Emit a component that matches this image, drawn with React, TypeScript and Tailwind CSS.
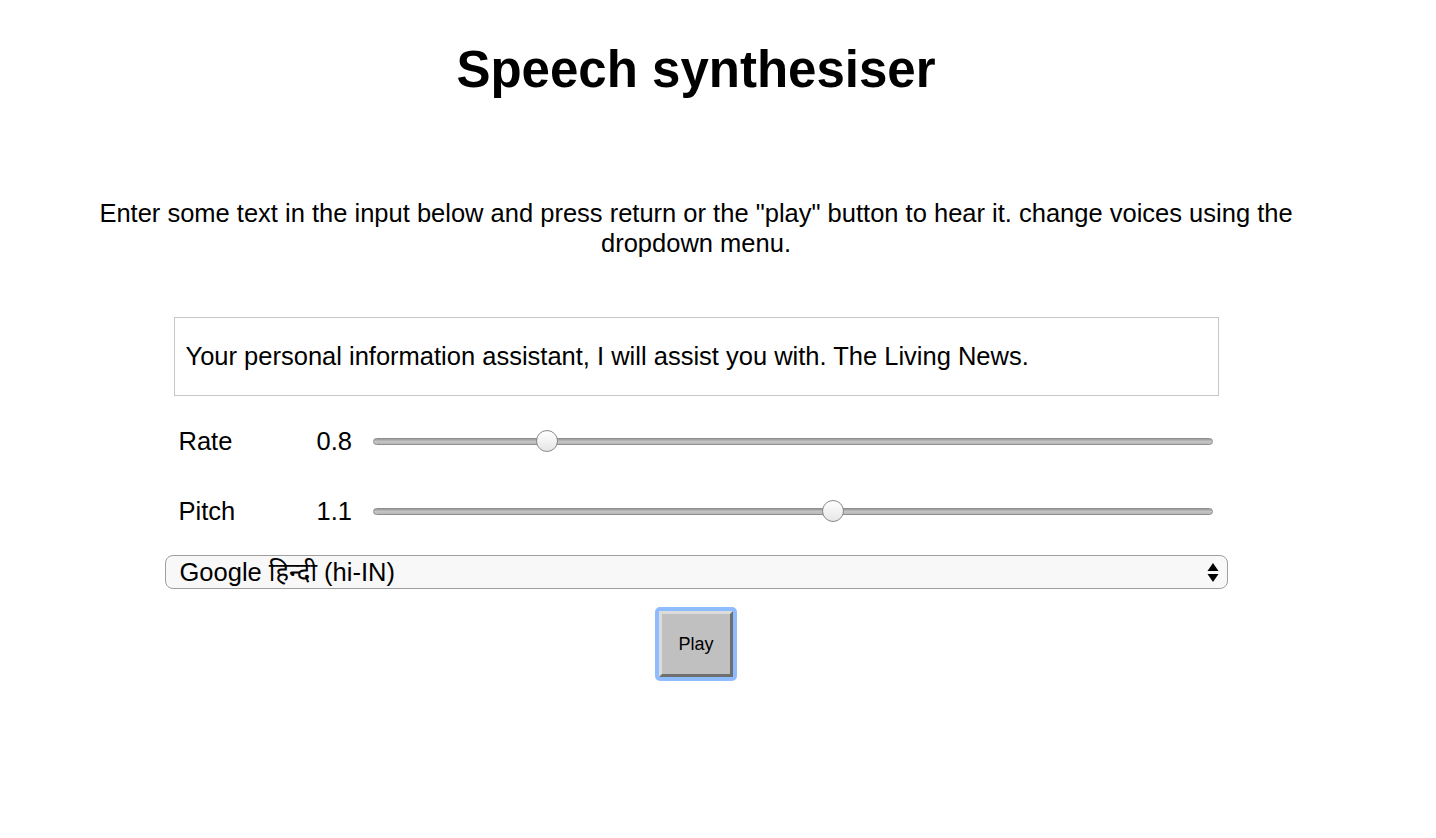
const font = { fontFamily: '"Liberation Sans", Arial, "Noto Sans", sans-serif' };

const Slider = ({ value, min, max }: { value: number; min: number; max: number }) => {
  const pct = (value - min) / (max - min);
  return (
    <div className="relative h-[24px] flex-1 flex items-center">
      <div className="h-[7px] w-full rounded-full border border-[#8e8e8e] bg-gradient-to-b from-[#9a9a9a] via-[#c4c4c4] to-[#b8b8b8]" />
      <div
        className="absolute top-[1px] h-[22px] w-[22px] rounded-full border border-[#8a8a8a] bg-gradient-to-b from-[#ffffff] to-[#e6e6e6]"
        style={{ left: `calc(${pct} * (100% - 22px))` }}
      />
    </div>
  );
};

export default function App() {
  const rate = 0.8;
  const pitch = 1.1;

  return (
    <div className="w-[1392px] bg-white text-black" style={font}>
      <h1 className="pt-[40px] text-center text-[51px] font-bold leading-[60px]">Speech synthesiser</h1>

      <p className="mx-auto mt-[98px] w-[1220px] text-center text-[25.5px] leading-[30px]">
        Enter some text in the input below and press return or the "play" button to hear it. change voices using the
        dropdown menu.
      </p>

      <div className="mx-auto mt-[59px] flex w-[1063px] flex-col">
        <div className="mx-auto flex h-[79px] w-[1045px] items-center border border-[#c6c6c6] px-[11px] text-[25.5px]">
          Your personal information assistant, I will assist you with. The Living News.
        </div>

        <div className="mt-[30px] flex h-[30px] items-center pl-[14px] pr-[15px] text-[25.5px]">
          <span className="w-[138px]">Rate</span>
          <span className="w-[56px]">{rate}</span>
          <Slider value={rate} min={0.5} max={2} />
        </div>

        <div className="mt-[40px] flex h-[30px] items-center pl-[14px] pr-[15px] text-[25.5px]">
          <span className="w-[138px]">Pitch</span>
          <span className="w-[56px]">{pitch}</span>
          <Slider value={pitch} min={0} max={2} />
        </div>

        <div className="mt-[29px] flex h-[34px] items-center justify-between rounded-[8px] border-[1.5px] border-[#9e9e9e] bg-[#f8f8f8] pl-[14px] pr-[8px] text-[25.5px]">
          <span>Google हिन्दी (hi-IN)</span>
          <svg width="12" height="24" viewBox="0 0 12 24">
            <path d="M6 3 L11.5 11 H0.5 Z" fill="#000" />
            <path d="M0.5 14 H11.5 L6 22 Z" fill="#000" />
          </svg>
        </div>

        <div className="mt-[18px] flex justify-center">
          <div className="rounded-[5px] bg-[#8ebcff] p-[4px]">
            <button className="h-[66px] w-[74px] border-[3px] border-t-[#dcdcdc] border-l-[#dcdcdc] border-b-[#6f6f6f] border-r-[#6f6f6f] bg-[#c0c0c0] text-[18px]">
              Play
            </button>
          </div>
        </div>
      </div>
    </div>
  );
}
